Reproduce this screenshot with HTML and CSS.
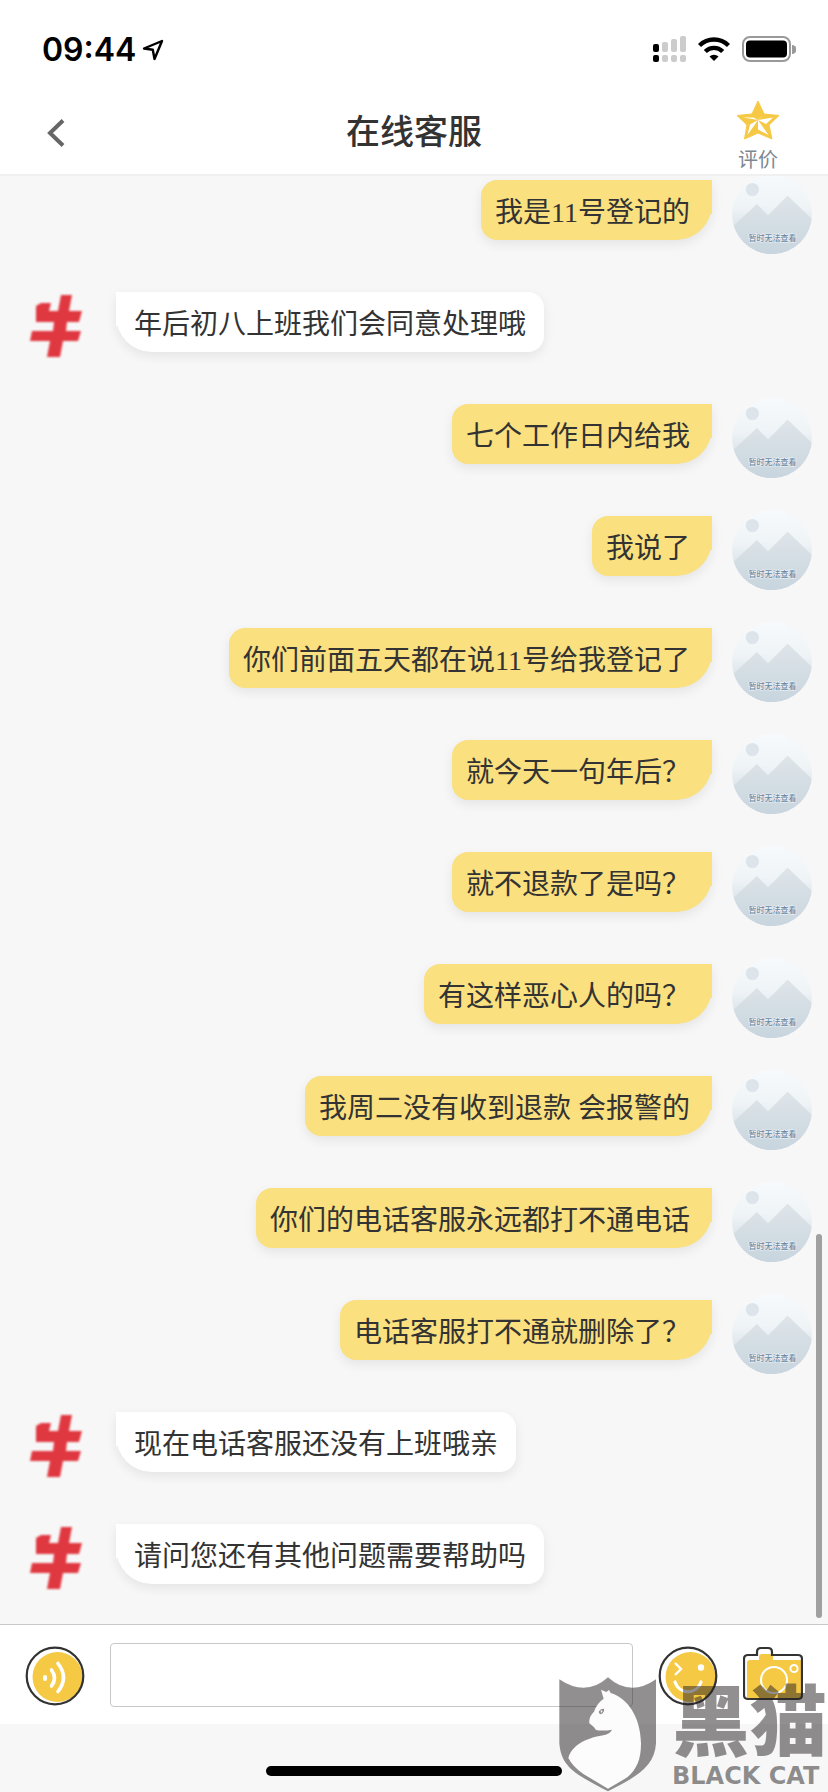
FILE: index.html
```html
<!DOCTYPE html>
<html lang="zh-CN">
<head>
<meta charset="utf-8">
<meta name="viewport" content="width=device-width, initial-scale=1">
<title>在线客服</title>
<link rel="stylesheet" href="styles.css">
</head>
<body>
<svg class="defs" aria-hidden="true">
  <defs>
    <linearGradient id="sky" x1="0" y1="0" x2="0" y2="1"><stop offset="0" stop-color="#f7fafc"/><stop offset=".4" stop-color="#eff4f7"/><stop offset="1" stop-color="#c6d3dd"/></linearGradient>
    <linearGradient id="hill" x1="0" y1="0" x2="0" y2="1"><stop offset="0" stop-color="#dfe5e9"/><stop offset="1" stop-color="#c8d5de"/></linearGradient>
    <clipPath id="round"><circle cx="40" cy="40" r="40"/></clipPath>
    <filter id="soft"><feGaussianBlur stdDeviation="1"/></filter>
    <symbol id="user" viewBox="0 0 80 80">
      <g clip-path="url(#round)">
        <rect width="80" height="80" fill="url(#sky)"/>
        <circle cx="20.300" cy="15.500" r="6.600" fill="#dde5eb"/>
        <path d="M0 53L25 30L36 41.500L55.500 21.500L80 45V80H0z" fill="url(#hill)"/>
        <text x="40.500" y="67" text-anchor="middle" class="avatar-text">暂时无法查看</text>
      </g>
    </symbol>
    <symbol id="agent" viewBox="0 0 80 80">
      <path filter="url(#soft)" fill="#e0383f" d="M45 9H56L53 25H66L63 36H51L50 45H65L62 55H47L44 71H31L34 55H14L16 45H37L38 36H20V20L25 17H35L33 25H42z"/>
    </symbol>
  </defs>
</svg>
<div class="app">
  <div class="status">
    <div class="clock"><span>09:44</span>
      <svg width="22" height="22" viewBox="0 0 22 22"><path d="M2 9.500L20 2L12.500 20L10.800 10.800z" fill="none" stroke="#000" stroke-width="2.400" stroke-linejoin="round"/></svg>
    </div>
    <div class="signals">
      <svg width="33" height="26" viewBox="0 0 33 26"><g fill="#ccc"><rect x="9" y="6" width="6" height="10" rx="2"/><rect x="18" y="3" width="6" height="13" rx="2"/><rect x="27" width="6" height="16" rx="2"/><rect x="9" y="19" width="6" height="7" rx="2"/><rect x="18" y="19" width="6" height="7" rx="2"/><rect x="27" y="19" width="6" height="7" rx="2"/></g><rect y="8" width="6" height="8" rx="2"/><rect y="19" width="6" height="7" rx="2"/></svg>
      <svg width="32" height="24" viewBox="0 0 32 24"><path d="M1.500 8.500a20.500 20.500 0 0 1 29 0M7.300 14.500a12.300 12.300 0 0 1 17.400 0" fill="none" stroke="#000" stroke-width="4.400"/><path d="M16 24l-4.500-4.500a6.500 6.500 0 0 1 9 0z"/></svg>
      <svg width="54" height="26" viewBox="0 0 54 26"><rect x="1" y="1" width="47" height="24" rx="7" fill="none" stroke="#999" stroke-width="2"/><rect x="4" y="4.500" width="41" height="17" rx="4"/><path d="M50 9a4.500 4.500 0 0 1 0 9z" fill="#999"/></svg>
    </div>
  </div>
  <header class="header">
    <button class="back" type="button" aria-label="返回"><svg width="20" height="30" viewBox="0 0 20 30"><path d="M17 2.500L4 15L17 27.500" fill="none" stroke="#666" stroke-width="4"/></svg></button>
    <h1 class="title">在线客服</h1>
    <button class="rate" type="button">
      <svg width="44" height="40" viewBox="0 0 44 40"><path fill="#f6c944" stroke="#f6c944" stroke-linejoin="round" d="M22 1L28 14L43 15.500L33 25L36 39L22 33L8.500 39L11 25L1 15.500L16 14z"/><path fill="#fff" d="M22 6V20L17.500 17.500H7L22 20L14 24.500L11.500 35L22 20V29.500L32.500 35L22 20L30 24L37 17.500L22 20L25.500 16.500z"/><path fill="#f6c944" d="M22 3V20L28 14z"/></svg>
      <span>评价</span>
    </button>
  </header>
  <main class="chat">
    <div class="row out"><svg class="avatar"><use href="#user"/></svg><p class="bubble">我是11号登记的</p></div>
    <div class="row in"><svg class="avatar"><use href="#agent"/></svg><p class="bubble">年后初八上班我们会同意处理哦</p></div>
    <div class="row out"><svg class="avatar"><use href="#user"/></svg><p class="bubble">七个工作日内给我</p></div>
    <div class="row out"><svg class="avatar"><use href="#user"/></svg><p class="bubble">我说了</p></div>
    <div class="row out"><svg class="avatar"><use href="#user"/></svg><p class="bubble">你们前面五天都在说11号给我登记了</p></div>
    <div class="row out"><svg class="avatar"><use href="#user"/></svg><p class="bubble">就今天一句年后？</p></div>
    <div class="row out"><svg class="avatar"><use href="#user"/></svg><p class="bubble">就不退款了是吗？</p></div>
    <div class="row out"><svg class="avatar"><use href="#user"/></svg><p class="bubble">有这样恶心人的吗？</p></div>
    <div class="row out"><svg class="avatar"><use href="#user"/></svg><p class="bubble">我周二没有收到退款 会报警的</p></div>
    <div class="row out"><svg class="avatar"><use href="#user"/></svg><p class="bubble">你们的电话客服永远都打不通电话</p></div>
    <div class="row out"><svg class="avatar"><use href="#user"/></svg><p class="bubble">电话客服打不通就删除了？</p></div>
    <div class="row in"><svg class="avatar"><use href="#agent"/></svg><p class="bubble">现在电话客服还没有上班哦亲</p></div>
    <div class="row in"><svg class="avatar"><use href="#agent"/></svg><p class="bubble">请问您还有其他问题需要帮助吗</p></div>
    <span class="scroll"></span>
  </main>
  <form class="composer">
    <button class="tool" type="button" aria-label="语音"><svg width="60" height="60" viewBox="0 0 60 60"><circle cx="32.500" cy="31" r="25" fill="#f6c944"/><circle cx="30" cy="30" r="28.300" fill="none" stroke="#333" stroke-width="2.200"/><rect x="18" y="29" width="4" height="6" rx="2" fill="#fff"/><path d="M26.500 24q6 8 0 16M33 17.500q11 14 0 28" fill="none" stroke="#fff" stroke-width="3.600" stroke-linecap="round"/></svg></button>
    <input class="message" type="text" aria-label="消息">
    <button class="tool" type="button" aria-label="表情"><svg width="60" height="60" viewBox="0 0 60 60"><circle cx="32.500" cy="31" r="25" fill="#f6c944"/><circle cx="30" cy="30" r="28.300" fill="none" stroke="#333" stroke-width="2.200"/><path d="M17 17l6 6-6 6" fill="none" stroke="#fff" stroke-width="2.400"/><circle cx="43" cy="21.500" r="3.200" fill="#fff"/><path d="M17 36c4 13 22 13 26 0" fill="none" stroke="#fff" stroke-width="3.200" stroke-linecap="round"/></svg></button>
    <button class="tool" type="button" aria-label="拍照"><svg width="60" height="60" viewBox="0 0 60 60"><path fill="#f6c944" d="M7 14H16V11q0-3 3-3h8q3 0 3 3v3H58V53H4V17q0-3 3-3z"/><path d="M5 9H14V6q0-4 4-4h7q4 0 4 4v3H55q4 0 4 4V49q0 4-4 4H5q-4 0-4-4V13q0-4 4-4z" fill="none" stroke="#333" stroke-width="2.200"/><circle cx="31" cy="34" r="13" fill="none" stroke="#fff" stroke-width="2"/><circle cx="51" cy="22.500" r="3.600" fill="none" stroke="#fff" stroke-width="2"/></svg></button>
  </form>
  <div class="safe"><span class="home"></span></div>
  <svg class="mark" width="272" height="118" viewBox="48 222 816 354">
    <path fill="#231f20" fill-opacity=".5" d="M58 238Q138 292 204 232Q270 292 348 238V430C344 500 290 530 204 574C112 525 64 505 58 430z"/>
    <path fill="#fcfcfc" d="M183 269L199 276L207 270L212 279C262 294 302 350 303 430C303 480 290 508 262 532L204 566L130 522Q98 500 85 474C98 430 150 412 190 406Q210 402 216 389Q190 394 168 390Q162 380 148 370Q146 350 162 335Q170 310 191 296z"/>
    <path fill="#8e8c8d" d="M176 336q4-10 16-10q2 10-8 16q-6 2-8-6z"/><path fill="#fcfcfc" d="M182 330l6 3-5 7z"/>
    <g fill="#231f20" fill-opacity=".5"><text class="mark-cn" x="397" y="449">黑猫</text><text class="mark-en" x="396" y="552">BLACK CAT</text></g>
  </svg>
</div>
</body>
</html>
```
FILE: styles.css
```css
* { box-sizing: border-box; }
body { margin: 0; background: #f7f7f7; color: #333; font-family: "Liberation Serif", "Noto Sans CJK SC", sans-serif; }
button { border: 0; padding: 0; background: none; font: inherit; color: inherit; display: block; }
svg { display: block; flex: none; }
.defs { position: absolute; width: 0; height: 0; }
.app { position: relative; display: flex; flex-direction: column; height: 100vh; overflow: hidden; }
.status { display: flex; justify-content: space-between; align-items: center; height: 88px; padding: 10px 32px 0 42px; background: #fff; color: #000; flex: none; }
.clock { display: flex; align-items: center; gap: 6px; padding-top: 2px; font: 600 32px/40px Inter, sans-serif; }
.signals { display: flex; align-items: center; gap: 12px; }
.header { display: grid; grid-template-columns: 140px 1fr 140px; height: 88px; background: #fff; border-bottom: 2px solid #f0f0f0; flex: none; position: relative; z-index: 1; }
.back { display: flex; align-items: center; padding: 2px 0 0 46px; }
.title { margin: 0; padding-top: 2px; text-align: center; font-size: 34px; line-height: 86px; font-weight: 500; }
.rate { display: flex; flex-direction: column; align-items: center; padding: 12px 0 0 0; font-size: 20px; line-height: 28px; color: #7d8792; gap: 6px; }
.chat { flex: 1; min-height: 0; display: flex; flex-direction: column; justify-content: flex-end; gap: 32px; padding: 0 16px 26px; position: relative; }
.row { display: flex; align-items: flex-start; gap: 20px; flex: none; }
.out { flex-direction: row-reverse; }
.avatar { width: 80px; height: 80px; }
.avatar-text { font: 500 8px "Noto Sans CJK SC", sans-serif; fill: #6986a2; stroke: #f2f6f9; stroke-width: 1px; paint-order: stroke; }
.bubble { position: relative; margin: 6px 0 0; padding: 13px 18px 7px; font-size: 28px; line-height: 40px; border-radius: 0 16px 16px 36px; background: #fff; box-shadow: 0 4px 12px rgba(0, 0, 0, .08); }
.bubble::before { content: ""; position: absolute; top: 0; left: 0; width: 8px; height: 34px; background: inherit; }
.out .bubble { padding: 13px 22px 7px 14px; background: #fae07f; border-radius: 16px 0 36px 16px; }
.out .bubble::before { left: auto; right: 0; }
.scroll { position: absolute; right: 6px; bottom: 6px; width: 6px; height: 384px; border-radius: 3px; background: #a0a0a0; }
.composer { display: flex; align-items: center; height: 100px; padding: 0 25px; border-top: 1px solid #c8c8c8; background: #fff; flex: none; gap: 25px; }
.tool { width: 60px; height: 60px; margin-top: 2px; flex: none; }
.message { flex: 1; min-width: 0; height: 64px; padding: 0 16px; border: 1px solid #c8c8c8; border-radius: 4px; background: #fff; font-size: 28px; }
.safe { display: flex; justify-content: center; height: 68px; padding-top: 42px; flex: none; }
.home { width: 296px; height: 10px; border-radius: 5px; background: #000; }
.mark { position: absolute; right: 0; bottom: 0; z-index: 2; overflow: visible; pointer-events: none; }
.mark-cn { font: 900 232px "Noto Sans CJK SC", sans-serif; }
.mark-en { font: 700 72px "DejaVu Sans", sans-serif; }
```
